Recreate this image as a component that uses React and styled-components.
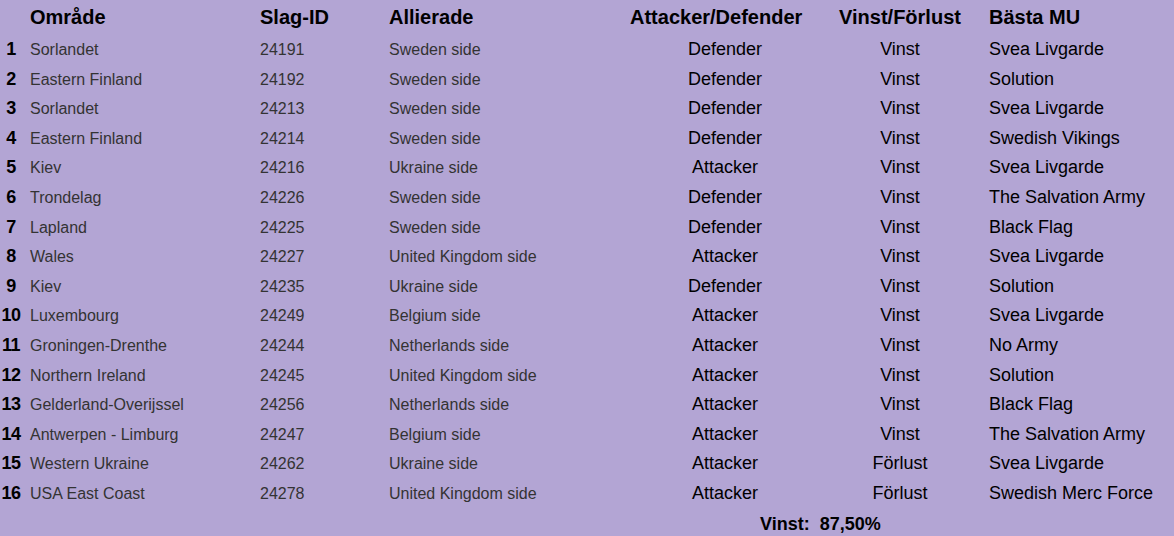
import React from 'react';
import styled, { createGlobalStyle } from 'styled-components';

const GlobalStyle = createGlobalStyle`
  html, body {
    margin: 0;
    padding: 0;
    background: #b3a5d4;
  }
  body {
    font-family: "Liberation Sans", Arial, sans-serif;
    color: #000;
  }
`;

const Page = styled.div`
  width: 1174px;
  min-height: 536px;
  background: #b3a5d4;
`;

const Table = styled.div`
  display: grid;
  grid-template-columns: 22px 238px 129px 241px 190px 160px 1fr;
`;

const Head = styled.div`
  height: 35px;
  line-height: 34px;
  font-size: 20px;
  font-weight: bold;
  white-space: nowrap;
  text-align: ${(p) => p.$align || 'left'};
  padding-left: ${(p) => p.$indent || 0}px;
`;

const Cell = styled.div`
  height: 29.6px;
  line-height: 29.6px;
  white-space: nowrap;
  font-size: ${(p) => (p.$muted ? 16 : 18)}px;
  color: ${(p) => (p.$muted ? '#333' : '#000')};
  text-align: ${(p) => p.$align || 'left'};
  padding-left: ${(p) => p.$indent || 0}px;
`;

const Num = styled(Cell)`
  font-size: 18px;
  font-weight: bold;
  text-align: center;
  letter-spacing: -0.5px;
`;

const Footer = styled.div`
  height: 30px;
  line-height: 30px;
  padding-left: 760px;
  font-size: 18px;
  font-weight: bold;
`;

const rows = [
  ['Sorlandet', '24191', 'Sweden side', 'Defender', 'Vinst', 'Svea Livgarde'],
  ['Eastern Finland', '24192', 'Sweden side', 'Defender', 'Vinst', 'Solution'],
  ['Sorlandet', '24213', 'Sweden side', 'Defender', 'Vinst', 'Svea Livgarde'],
  ['Eastern Finland', '24214', 'Sweden side', 'Defender', 'Vinst', 'Swedish Vikings'],
  ['Kiev', '24216', 'Ukraine side', 'Attacker', 'Vinst', 'Svea Livgarde'],
  ['Trondelag', '24226', 'Sweden side', 'Defender', 'Vinst', 'The Salvation Army'],
  ['Lapland', '24225', 'Sweden side', 'Defender', 'Vinst', 'Black Flag'],
  ['Wales', '24227', 'United Kingdom side', 'Attacker', 'Vinst', 'Svea Livgarde'],
  ['Kiev', '24235', 'Ukraine side', 'Defender', 'Vinst', 'Solution'],
  ['Luxembourg', '24249', 'Belgium side', 'Attacker', 'Vinst', 'Svea Livgarde'],
  ['Groningen-Drenthe', '24244', 'Netherlands side', 'Attacker', 'Vinst', 'No Army'],
  ['Northern Ireland', '24245', 'United Kingdom side', 'Attacker', 'Vinst', 'Solution'],
  ['Gelderland-Overijssel', '24256', 'Netherlands side', 'Attacker', 'Vinst', 'Black Flag'],
  ['Antwerpen - Limburg', '24247', 'Belgium side', 'Attacker', 'Vinst', 'The Salvation Army'],
  ['Western Ukraine', '24262', 'Ukraine side', 'Attacker', 'Förlust', 'Svea Livgarde'],
  ['USA East Coast', '24278', 'United Kingdom side', 'Attacker', 'Förlust', 'Swedish Merc Force'],
];

export default function App() {
  const wins = rows.filter((r) => r[4] === 'Vinst').length;
  const pct = ((wins / rows.length) * 100).toFixed(2).replace('.', ',');

  return (
    <Page>
      <GlobalStyle />
      <Table>
        <Head />
        <Head $indent={8}>Område</Head>
        <Head>Slag-ID</Head>
        <Head>Allierade</Head>
        <Head>Attacker/Defender</Head>
        <Head $align="center">Vinst/Förlust</Head>
        <Head $indent={9}>Bästa MU</Head>
        {rows.map((r, i) => (
          <React.Fragment key={i}>
            <Num>{i + 1}</Num>
            <Cell $muted $indent={8}>{r[0]}</Cell>
            <Cell $muted>{r[1]}</Cell>
            <Cell $muted>{r[2]}</Cell>
            <Cell $align="center">{r[3]}</Cell>
            <Cell $align="center">{r[4]}</Cell>
            <Cell $indent={9}>{r[5]}</Cell>
          </React.Fragment>
        ))}
      </Table>
      <Footer>Vinst:&nbsp; {pct}%</Footer>
    </Page>
  );
}
